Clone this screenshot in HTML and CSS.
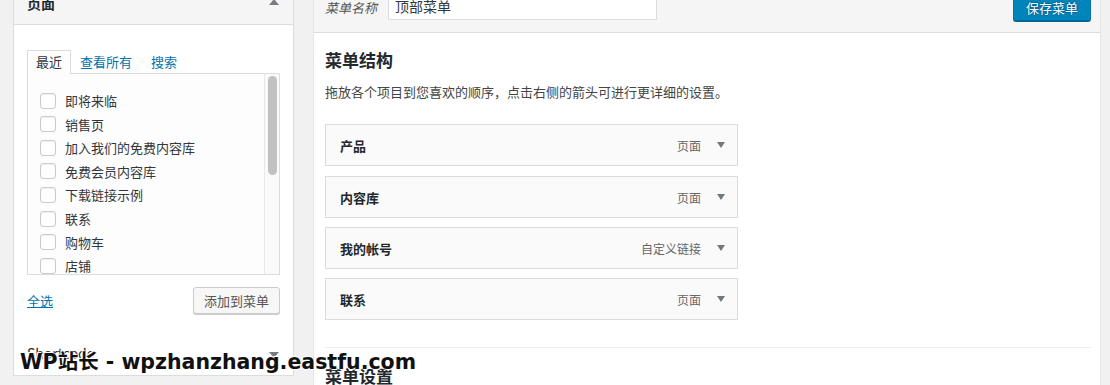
FILE: index.html
```html
<!DOCTYPE html>
<html lang="zh-CN">
<head>
<meta charset="utf-8">
<title>菜单</title>
<link rel="stylesheet" href="styles.css">
</head>
<body>
<div class="wrap">
  <aside class="side">
    <section class="acc open">
      <div class="acc-title">页面<span class="arrow-up"></span></div>
      <div class="acc-body">
        <ul class="tabs">
          <li class="tab active">最近</li>
          <li class="tab">查看所有</li>
          <li class="tab">搜索</li>
        </ul>
        <div class="panel">
          <ul class="checklist">
            <li><span class="cb"></span>即将来临</li>
            <li><span class="cb"></span>销售页</li>
            <li><span class="cb"></span>加入我们的免费内容库</li>
            <li><span class="cb"></span>免费会员内容库</li>
            <li><span class="cb"></span>下载链接示例</li>
            <li><span class="cb"></span>联系</li>
            <li><span class="cb"></span>购物车</li>
            <li><span class="cb"></span>店铺</li>
          </ul>
          <div class="scrollbar"><div class="thumb"></div></div>
        </div>
        <div class="actions">
          <a class="select-all" href="#">全选</a>
          <button class="btn">添加到菜单</button>
        </div>
      </div>
    </section>
    <section class="acc">
      <div class="acc-title small">Shortcode<span class="arrow-down"></span></div>
    </section>
  </aside>
  <main class="main">
    <header class="menu-header">
      <label class="name-label">菜单名称</label>
      <div class="name-input">顶部菜单</div>
      <button class="save">保存菜单</button>
    </header>
    <div class="menu-body">
      <h3 class="h3">菜单结构</h3>
      <p class="desc">拖放各个项目到您喜欢的顺序，点击右侧的箭头可进行更详细的设置。</p>
      <ul class="items">
        <li class="item"><span class="item-title">产品</span><span class="item-type">页面</span><span class="arrow-down dark"></span></li>
        <li class="item"><span class="item-title">内容库</span><span class="item-type">页面</span><span class="arrow-down dark"></span></li>
        <li class="item"><span class="item-title">我的帐号</span><span class="item-type">自定义链接</span><span class="arrow-down dark"></span></li>
        <li class="item"><span class="item-title">联系</span><span class="item-type">页面</span><span class="arrow-down dark"></span></li>
      </ul>
      <div class="divider"></div>
      <h3 class="h3 settings">菜单设置</h3>
    </div>
  </main>
</div>
<div class="watermark">WP站长 - wpzhanzhang.eastfu.com</div>
</body>
</html>
```
FILE: styles.css
```css
html, body {
  margin: 0;
  padding: 0;
  height: 385px;
  overflow: hidden;
}
body {
  background: #f1f1f1;
  font-family: "Noto Sans CJK SC", "Liberation Sans", sans-serif;
  font-size: 13px;
  color: #32373c;
}
ul { list-style: none; margin: 0; padding: 0; }

.wrap {
  display: flex;
  gap: 19px;
  padding-left: 13px;
  align-items: flex-start;
}

/* sidebar */
.side {
  width: 279px;
  flex: none;
  border-left: 1px solid #dcdcdc;
  border-right: 1px solid #dcdcdc;
  margin-top: -18px;
  background: #fff;
}
.acc-title {
  position: relative;
  height: 42px;
  line-height: 42px;
  padding-left: 13px;
  font-size: 14px;
  font-weight: 600;
  color: #23282d;
  background: #f5f5f5;
  border-bottom: 1px solid #dcdcdc;
}
.acc-title.small {
  background: #fff;
  height: 43px;
  line-height: 43px;
  font-weight: 400;
  font-size: 14px;
  color: #23282d;
}
.arrow-up, .arrow-down {
  position: absolute;
  right: 14px;
  top: 50%;
  width: 0;
  height: 0;
  border-left: 5px solid transparent;
  border-right: 5px solid transparent;
}
.arrow-up {
  border-bottom: 6px solid #787c82;
  margin-top: -4px;
}
.arrow-down {
  border-top: 6px solid #787c82;
  margin-top: -2px;
}
.acc-body {
  padding: 25px 13px 18px 13px;
}
.tabs {
  display: flex;
  height: 23px;
  position: relative;
  z-index: 1;
}
.tab {
  padding: 0 8px;
  line-height: 22px;
  color: #0073aa;
  border: 1px solid transparent;
  border-bottom: none;
}
.tab + .tab {
  padding-left: 8px;
  padding-right: 9px;
}
.tab.active {
  color: #32373c;
  border-color: #dcdcdc;
  background: #fdfdfd;
  height: 23px;
  padding: 0 8px;
}
.panel {
  position: relative;
  height: 200px;
  border: 1px solid #dcdcdc;
  background: #fdfdfd;
  overflow: hidden;
}
.checklist {
  padding: 15px 0 0 12px;
}
.checklist li {
  display: flex;
  align-items: center;
  height: 23.55px;
  color: #32373c;
}
.cb {
  width: 14px;
  height: 14px;
  border: 1px solid #c8cbcf;
  border-radius: 3px;
  background: #fff;
  margin-right: 9px;
  box-shadow: inset 0 1px 2px rgba(0,0,0,0.07);
  flex: none;
}
.scrollbar {
  position: absolute;
  top: 0;
  right: 0;
  width: 14px;
  height: 100%;
  background: #fafafa;
  border-left: 1px solid #e8e8e8;
}
.thumb {
  margin: 2px 0 0 3px;
  width: 9px;
  height: 99px;
  border-radius: 5px;
  background: #c1c1c1;
}
.actions {
  display: flex;
  justify-content: space-between;
  align-items: center;
  margin-top: 12px;
}
.select-all {
  color: #0073aa;
  text-decoration: underline;
  font-size: 13px;
}
.btn {
  height: 27px;
  padding: 0 10px;
  font-family: inherit;
  font-size: 13px;
  color: #555;
  background: #f7f7f7;
  border: 1px solid #ccc;
  border-radius: 3px;
  box-shadow: 0 1px 0 #ccc;
}

/* main */
.main {
  width: 786px;
  flex: none;
  border-left: 1px solid #e5e5e5;
  border-right: 1px solid #e5e5e5;
  background: #fff;
  margin-top: -10px;
}
.menu-header {
  display: flex;
  align-items: flex-start;
  height: 42px;
  padding: 0 9px 0 11px;
  background: #f5f5f5;
  border-bottom: 1px solid #dddddd;
}
.name-label {
  font-style: italic;
  color: #555;
  line-height: 28px;
  margin-top: 4px;
  width: 63px;
}
.name-input {
  width: 261px;
  height: 27px;
  margin-top: 1px;
  padding-left: 6px;
  border: 1px solid #ddd;
  background: #fff;
  font-size: 14px;
  line-height: 29px;
  color: #32373c;
}
.save {
  margin-left: auto;
  margin-top: 4px;
  height: 28px;
  width: 78px;
  padding: 0;
  font-family: inherit;
  font-size: 13px;
  color: #fff;
  background: #0085ba;
  border: 1px solid #0073aa;
  border-bottom: 2px solid #006799;
  border-radius: 3px;
  text-shadow: 0 -1px 1px #006799, 1px 0 1px #006799, 0 1px 1px #006799, -1px 0 1px #006799;
}
.menu-body {
  padding: 0 9px 0 11px;
}
.h3 {
  margin: 0;
  font-size: 17px;
  font-weight: 600;
  color: #23282d;
  line-height: 24px;
  padding-top: 15px;
}
.desc {
  margin: 10px 0 0 0;
  line-height: 20px;
  color: #444;
}
.items {
  margin-top: 22px;
}
.item {
  position: relative;
  display: flex;
  align-items: center;
  width: 411px;
  height: 40px;
  border: 1px solid #dcdcdc;
  background: #fafafa;
  margin-bottom: 10px;
}
.item:nth-child(2), .item:nth-child(3) { margin-bottom: 9px; }
.item:last-child { margin-bottom: 0; }
.item-title {
  padding-left: 14px;
  font-weight: 600;
  color: #23282d;
}
.item-type {
  margin-left: auto;
  margin-right: 36px;
  color: #666;
  font-size: 12px;
}
.item .arrow-down {
  right: 12px;
  border-left-width: 4px;
  border-right-width: 4px;
  border-top: 6px solid #72777c;
  margin-top: -3px;
}
.divider {
  margin-top: 27px;
  height: 1px;
  background: #eeeeee;
}
.settings {
  padding-top: 16px;
}

/* watermark */
.watermark {
  position: absolute;
  left: 20px;
  top: 348px;
  font-family: "DejaVu Sans", "Noto Sans CJK SC", sans-serif;
  font-weight: 700;
  font-size: 20.5px;
  line-height: 28px;
  color: #111;
  text-shadow: 0 0 2px #fff, 0 0 2px #fff, 1px 1px 0 #fff, -1px -1px 0 #fff;
  white-space: nowrap;
}
```
